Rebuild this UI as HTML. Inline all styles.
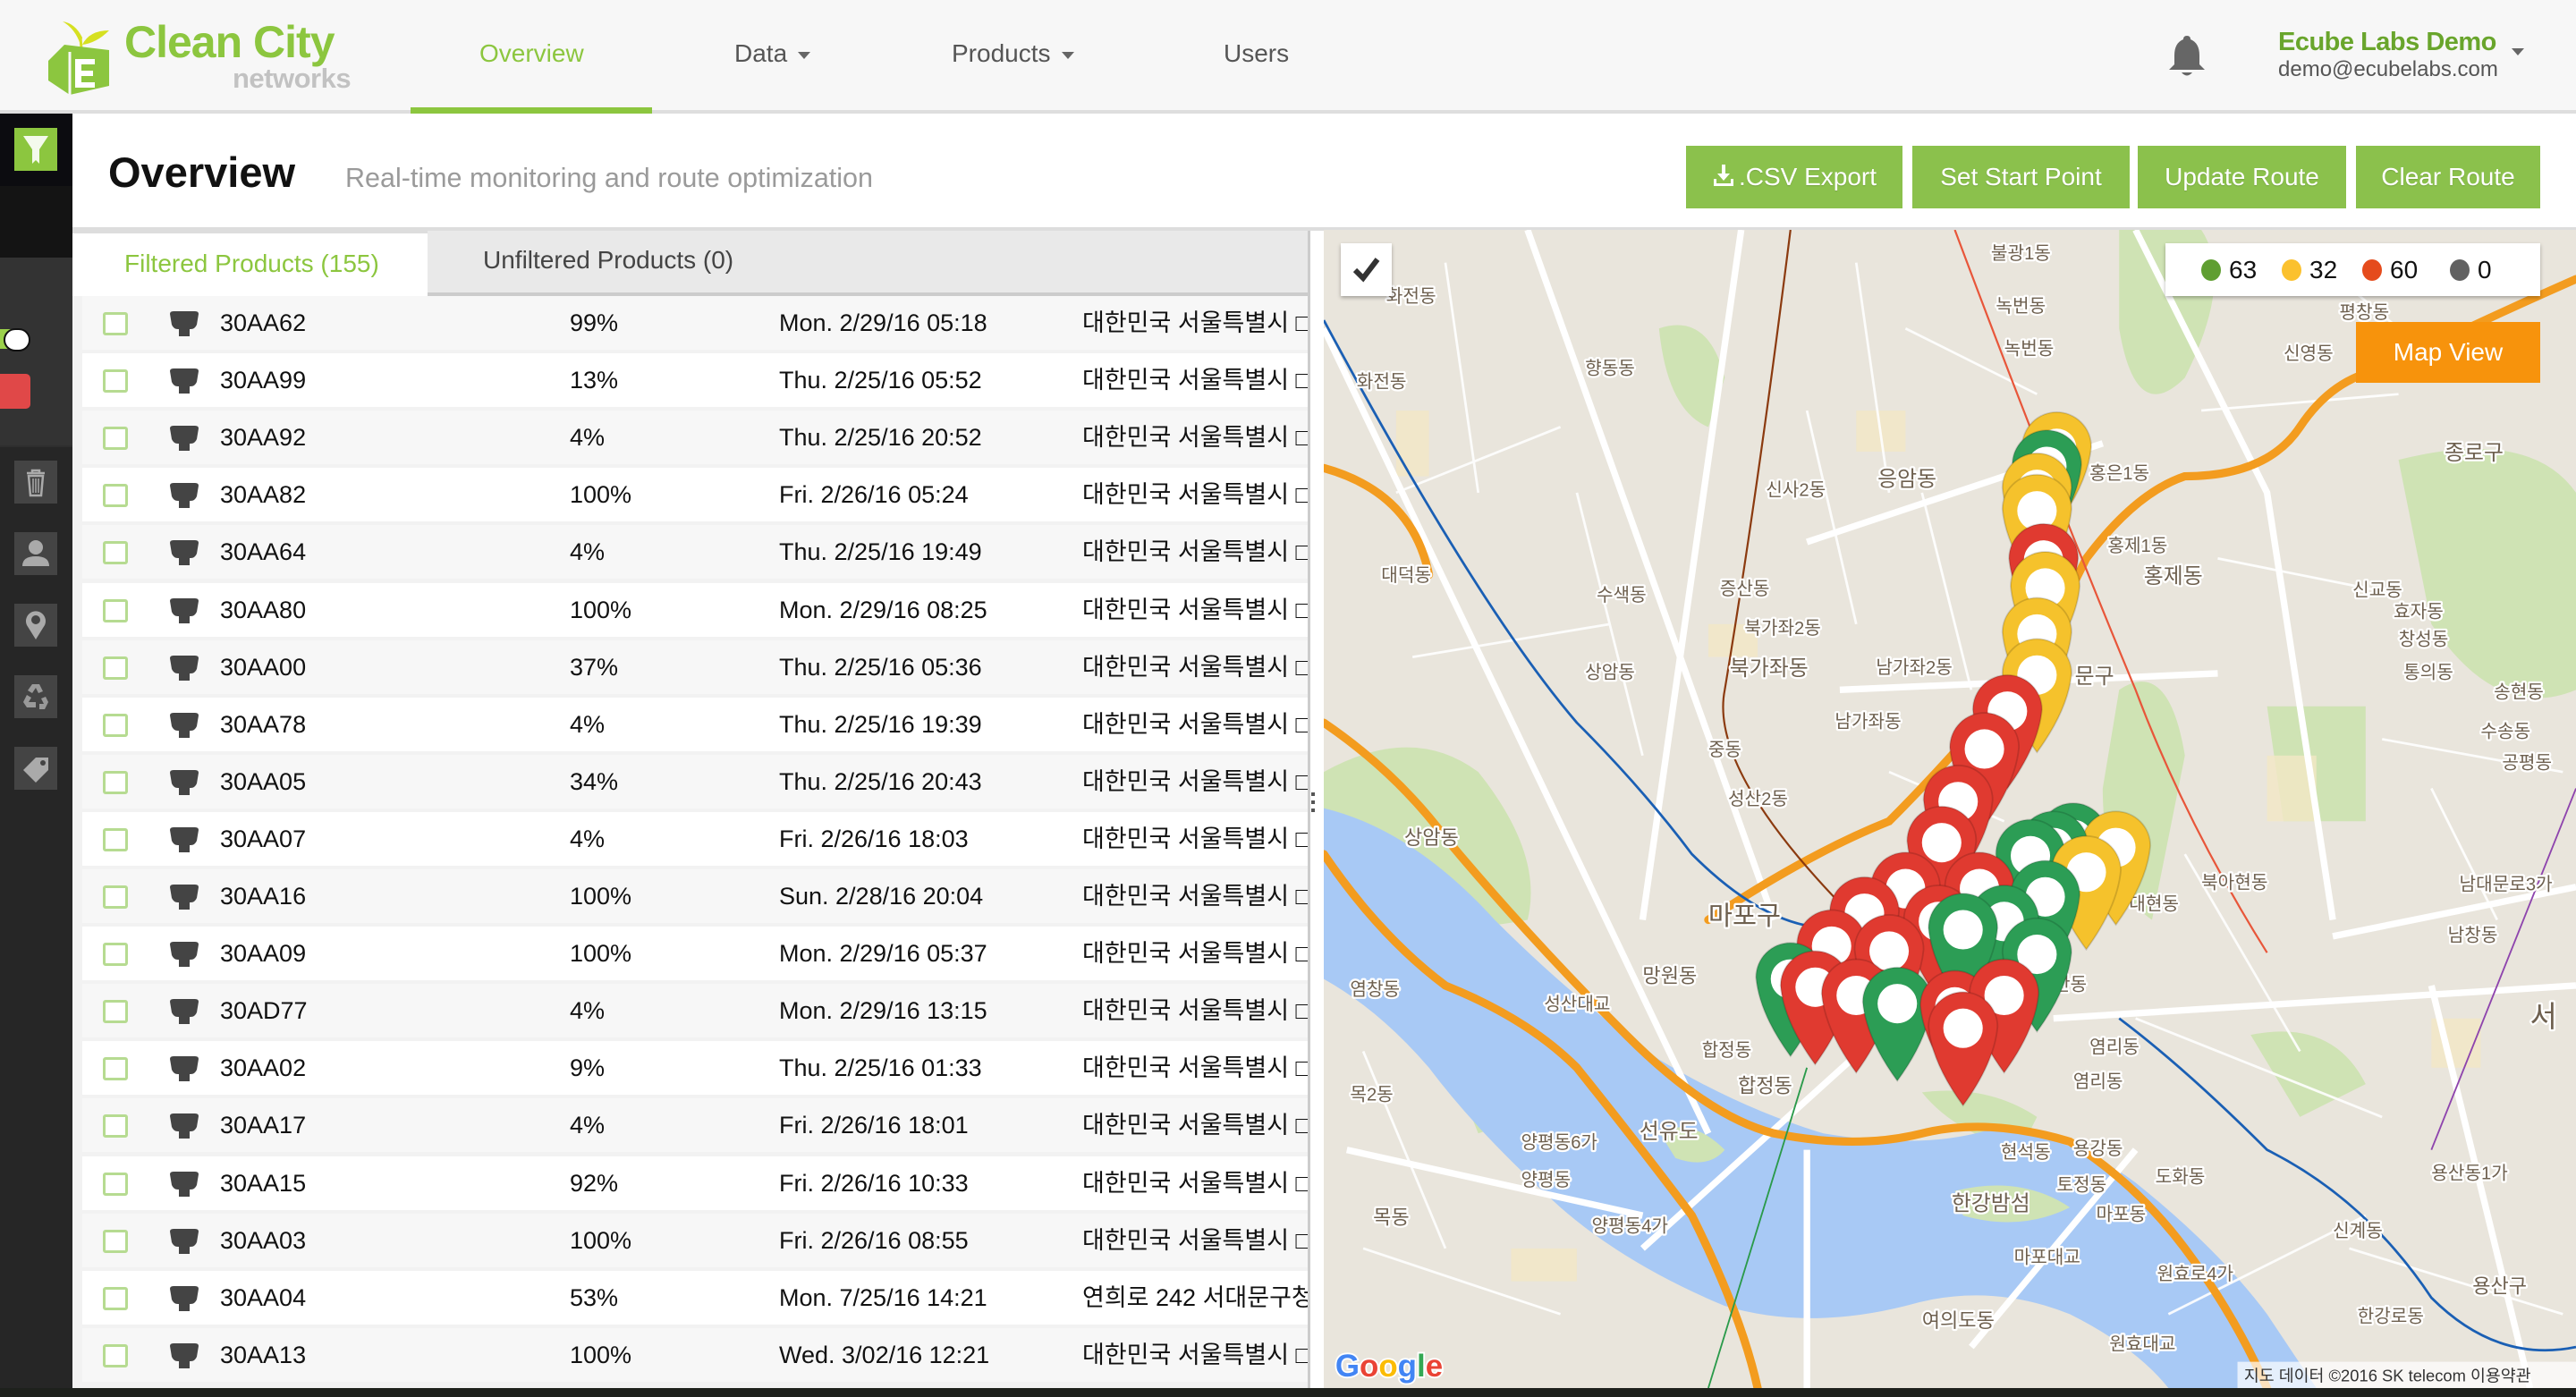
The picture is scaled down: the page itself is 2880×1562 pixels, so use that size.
<!DOCTYPE html>
<html><head><meta charset="utf-8"><style>
*{margin:0;padding:0;box-sizing:border-box}
body{width:2880px;height:1562px;overflow:hidden;background:#1c1f1a;font-family:"Liberation Sans","Noto Sans CJK KR",sans-serif;position:relative}
.abs{position:absolute}
#hdr{left:0;top:0;width:2880px;height:127px;background:#f7f7f7;border-bottom:4px solid #dedede}
.nav{position:absolute;top:44px;font-size:28px;color:#555}
.car{display:inline-block;width:0;height:0;border-left:7px solid transparent;border-right:7px solid transparent;border-top:8px solid #666;vertical-align:middle;margin-left:12px}
#side{left:0;top:127px;width:81px;height:1425px;background:#262626}
#main{left:81px;top:127px;width:2799px;height:1425px;background:#fff}
.btn{position:absolute;top:163px;height:70px;background:#8bc14c;color:#fff;font-size:28px;line-height:70px;text-align:center;text-shadow:0 1px 1px rgba(0,0,0,.15)}
.row{position:absolute;left:92px;width:1370px;height:60px;font-size:27px;color:#111;line-height:60px}
.row span{position:absolute;top:0}
.cb{position:absolute;left:23px;top:18px;width:28px;height:26px;border:3px solid #b6db91;border-radius:3px;background:#fff}
.bin{position:absolute;left:97px;top:16px;width:34px;height:30px}
.tile{position:absolute;left:16px;width:48px;height:48px;background:#444}
.lbl{font-family:"Liberation Sans","Noto Sans CJK KR",sans-serif;fill:#6e604f;stroke:#fff;stroke-width:2.5px;paint-order:stroke;stroke-linejoin:round}
</style></head><body>

<div id="hdr" class="abs">
  <svg class="abs" style="left:50px;top:20px" width="75" height="86" viewBox="0 0 75 86">
    <path d="M40 30 Q34 12 20 4 Q34 6 42 22 Z" fill="#d6e021"/>
    <path d="M42 30 Q50 14 72 14 Q58 28 42 30 Z" fill="#d6e021"/>
    <path d="M40 22 L41 34" stroke="#d6e021" stroke-width="3"/>
    <path d="M4 48 L22 30 L72 36 L72 76 L28 86 L4 70 Z" fill="#8cc63f"/>
    <path d="M28 38 L28 86" stroke="#f7f7f7" stroke-width="3"/>
    <path d="M34 46 h22 v6 h-15 v7 h13 v6 h-13 v7 h15 v6 h-22 z" fill="#fff"/>
  </svg>
  <div class="abs" style="left:139px;top:18px;font-size:50px;font-weight:bold;color:#8cc63f;letter-spacing:-1px">Clean City</div>
  <div class="abs" style="left:260px;top:70px;font-size:31px;font-weight:bold;color:#c2c2c2;letter-spacing:-0.5px">networks</div>
  <div class="nav" style="left:536px;color:#8cc63f">Overview</div>
  <div class="nav" style="left:821px">Data<span class="car"></span></div>
  <div class="nav" style="left:1064px">Products<span class="car"></span></div>
  <div class="nav" style="left:1368px">Users</div>
  <div class="abs" style="left:459px;top:120px;width:270px;height:7px;background:#8cc63f"></div>
  <svg class="abs" style="left:2423px;top:38px" width="44" height="50" viewBox="0 0 44 50"><path d="M22 2 Q26 2 26 6 Q36 10 36 24 L36 34 L42 40 L2 40 L8 34 L8 24 Q8 10 18 6 Q18 2 22 2Z" fill="#666"/><path d="M16 43 Q22 50 28 43Z" fill="#666"/></svg>
  <div class="abs" style="left:2547px;top:31px;font-size:29px;font-weight:bold;color:#69a52c;letter-spacing:-0.5px">Ecube Labs Demo</div>
  <div class="abs" style="left:2547px;top:64px;font-size:24px;color:#555">demo@ecubelabs.com</div>
  <div class="abs" style="left:2808px;top:54px;border-left:7px solid transparent;border-right:7px solid transparent;border-top:8px solid #666"></div>
</div>

<div id="side" class="abs">
  <div class="abs" style="left:0;top:0;width:81px;height:81px;background:#0c0c10"></div>
  <div class="abs" style="left:16px;top:16px;width:48px;height:48px;background:#8cc63f"><svg width="48" height="48"><path d="M10 9 H38 L28 24 V40 L24 36 L20 40 V24 Z" fill="#fff" opacity=".9"/></svg></div>
  <div class="abs" style="left:0;top:81px;width:81px;height:80px;background:#141414"></div>
  <div class="abs" style="left:0;top:161px;width:81px;height:210px;background:#333"></div>
  <div class="abs" style="left:0;top:241px;width:14px;height:22px;background:#9bd14b"></div>
  <div class="abs" style="left:4px;top:240px;width:30px;height:26px;background:#fff;border:2px solid #111;border-radius:14px"></div>
  <div class="abs" style="left:0;top:291px;width:34px;height:39px;background:#e04848;border-radius:0 5px 5px 0"></div>
  <div class="abs" style="left:0;top:371px;width:81px;height:2px;background:#2e2e2e"></div>
  <div class="tile" style="top:388px"><svg width="48" height="48"><path d="M14 14 h20 M20 14 v-3 h8 v3 M16 17 h16 l-2 22 h-12 z" fill="none" stroke="#aaa" stroke-width="2.5"/><path d="M21 20v16M24 20v16M27 20v16" stroke="#aaa" stroke-width="1.5"/></svg></div>
  <div class="tile" style="top:468px"><svg width="48" height="48"><circle cx="24" cy="17" r="8" fill="#aaa"/><path d="M9 38 Q9 27 24 27 Q39 27 39 38Z" fill="#aaa"/></svg></div>
  <div class="tile" style="top:548px"><svg width="48" height="48"><path d="M24 40 L14 24 A11 11 0 1 1 34 24 Z" fill="#aaa"/><circle cx="24" cy="18" r="5" fill="#444"/></svg></div>
  <div class="tile" style="top:628px"><svg width="48" height="48"><g fill="#999"><path d="M20 10 L28 10 L32 18 L27 20 L24 14 L20 20 L15 17Z"/><path d="M10 30 L14 22 L19 25 L16 30 L24 30 L24 36 L14 36Z"/><path d="M38 30 L34 38 L28 38 L28 32 L33 32 L30 26 L35 24Z"/></g></svg></div>
  <div class="tile" style="top:708px"><svg width="48" height="48"><path d="M10 26 L24 12 L38 12 L38 26 L24 40 Z" fill="#aaa"/><circle cx="32" cy="18" r="3" fill="#444"/></svg></div>
</div>

<div id="main" class="abs"></div>
<div class="abs" style="left:121px;top:165px;font-size:47px;font-weight:bold;color:#111">Overview</div>
<div class="abs" style="left:386px;top:182px;font-size:30.5px;color:#9a9a9a">Real-time monitoring and route optimization</div>
<div class="btn" style="left:1885px;width:242px"><svg width="26" height="28" viewBox="0 0 26 28" style="vertical-align:-3px;margin-right:4px"><path d="M11 2h4v10h5l-7 8-7-8h5z" fill="#fff"/><path d="M2 18v8h22v-8h-3v5H5v-5z" fill="#fff"/></svg>.CSV Export</div>
<div class="btn" style="left:2138px;width:243px">Set Start Point</div>
<div class="btn" style="left:2390px;width:233px">Update Route</div>
<div class="btn" style="left:2634px;width:206px">Clear Route</div>
<div class="abs" style="left:81px;top:254px;width:2799px;height:4px;background:#ddd"></div>

<div class="abs" style="left:81px;top:258px;width:1381px;height:1294px;background:#f2f2f2"></div>
<div class="abs" style="left:478px;top:258px;width:984px;height:73px;background:#e9e9e9;border-bottom:4px solid #ccc"></div>
<div class="abs" style="left:81px;top:258px;width:397px;height:73px;background:#fff;border-top:3px solid #ddd"></div>
<div class="abs" style="left:139px;top:279px;font-size:28px;color:#8cc63f">Filtered Products (155)</div>
<div class="abs" style="left:540px;top:275px;font-size:28px;color:#444">Unfiltered Products (0)</div>

<div id="rows"></div>
<div class="abs" style="left:1462px;top:258px;width:18px;height:1294px;background:#fff;border-left:3px solid #ccc"></div>
<div class="abs" style="left:1466px;top:886px;width:4px;height:4px;background:#555;box-shadow:0 9px 0 #555,0 18px 0 #555"></div>

<svg class="abs" style="left:1480px;top:257px" width="1400" height="1295" viewBox="806 140 762 705" preserveAspectRatio="none">
<rect x="806" y="140" width="762" height="705" fill="#e9e5dc"/>
<g fill="#cfe3b4">
<path d="M1010 200 Q1040 190 1050 230 L1040 260 Q1015 250 1010 200Z"/>
<path d="M1290 140 L1340 140 Q1360 170 1330 230 Q1300 260 1290 200Z"/>
<path d="M1460 280 Q1540 260 1568 300 L1568 420 Q1520 440 1480 380Z"/>
<path d="M1290 420 Q1320 400 1330 460 L1310 560 Q1280 540 1280 480Z"/>
<path d="M806 560 L806 470 Q860 440 900 470 Q940 520 930 560 Q880 570 806 560Z"/>
<path d="M1170 665 Q1210 660 1240 680 L1230 700 Q1190 690 1170 665Z"/>
<path d="M1380 430 L1440 430 L1440 500 L1390 500Z"/>
<path d="M880 640 Q920 640 930 680 L900 690Z"/>
<path d="M1370 630 Q1420 620 1440 660 L1400 680Z"/>
</g>
<g fill="#f3e7c6" opacity=".8">
<rect x="1200" y="520" width="40" height="30"/><rect x="1380" y="460" width="30" height="40"/><rect x="1040" y="380" width="30" height="20"/><rect x="1130" y="250" width="30" height="25"/><rect x="850" y="250" width="20" height="40"/><rect x="1480" y="620" width="30" height="30"/><rect x="920" y="760" width="40" height="20"/>
</g>
<path d="M806 492 Q860 505 910 560 Q960 610 1010 645 Q1060 675 1110 690 Q1170 700 1210 688 Q1260 690 1300 720 Q1350 760 1380 800 Q1400 830 1410 845 L1320 845 Q1300 820 1260 800 Q1210 780 1160 795 Q1100 810 1050 795 Q990 770 950 735 Q900 690 870 650 Q840 615 806 596Z" fill="#a8c9f5"/>
<path d="M1010 689 Q1030 680 1050 700 Q1040 712 1020 705Z" fill="#cfe3b4"/>
<path d="M1190 725 Q1230 715 1260 735 Q1230 750 1195 740Z" fill="#cfe3b4"/>
<g stroke="#fff" stroke-width="4" fill="none">
<path d="M806 200 L1040 690"/><path d="M930 140 L1080 560"/><path d="M1060 140 L1020 420 L1000 560"/>
<path d="M1100 330 L1280 270"/><path d="M1120 420 L1350 410"/><path d="M1300 140 L1380 300 L1420 560"/>
<path d="M1420 570 L1568 540"/><path d="M1000 760 L1210 570"/><path d="M1200 820 L1300 700"/>
<path d="M1100 700 L1100 845"/><path d="M1250 620 L1568 600"/><path d="M820 700 L1000 740"/><path d="M1480 600 L1540 845"/>
</g>
<g stroke="#fff" stroke-width="1.5" fill="none" opacity=".9">
<path d="M850 300 L950 260"/><path d="M860 400 L980 380"/><path d="M1130 160 L1150 300"/><path d="M1160 200 L1240 240"/><path d="M1350 340 L1450 360"/><path d="M1450 450 L1560 470"/><path d="M1300 620 L1450 680"/><path d="M830 760 L950 800"/><path d="M1430 760 L1560 800"/><path d="M1330 520 L1400 640"/>
<path d="M880 160 L900 300"/><path d="M960 300 L1000 460"/><path d="M1170 300 L1200 420"/><path d="M1340 250 L1460 240"/><path d="M1480 480 L1520 560"/><path d="M830 640 L880 760"/><path d="M1320 800 L1440 740"/><path d="M1150 470 L1220 500"/><path d="M1100 250 L1130 380"/><path d="M1400 150 L1460 200"/>
</g>
<g stroke="#f39c1f" stroke-width="5" fill="none" stroke-linecap="round">
<path d="M806 440 Q850 470 880 510 Q930 570 990 630 Q1040 680 1080 690 Q1130 700 1170 690 Q1210 680 1260 695 Q1300 720 1330 760 Q1360 800 1380 845"/>
<path d="M806 520 Q840 570 880 600 Q930 620 960 650 Q1000 700 1030 740 Q1060 800 1070 845"/>
<path d="M806 285 Q860 300 870 350"/>
<path d="M1040 560 Q1100 520 1150 500 Q1190 460 1240 400 L1270 340 Q1300 300 1330 290 Q1380 290 1400 260 Q1420 230 1450 225 Q1500 200 1568 170"/>
</g>
<path d="M806 195 Q900 370 960 440 Q1000 480 1030 520 Q1090 580 1140 560" stroke="#1a5fb4" stroke-width="1.5" fill="none"/>
<path d="M1290 620 Q1330 650 1380 700 Q1440 730 1480 790 Q1520 830 1568 820" stroke="#1a5fb4" stroke-width="1.5" fill="none"/>
<path d="M1090 140 Q1070 300 1050 420 Q1040 470 1130 560" stroke="#8b3a0f" stroke-width="1.2" fill="none"/>
<path d="M1190 140 Q1250 300 1300 420 Q1330 500 1380 580" stroke="#e8563a" stroke-width="1.2" fill="none"/>
<path d="M1100 650 L1040 845" stroke="#2a9a4a" stroke-width="1" fill="none"/>
<path d="M1480 700 L1568 480" stroke="#8e44ad" stroke-width="1" fill="none"/>
<g class="lbl" font-size="11">
<text x="844" y="184">화전동</text><text x="826" y="236">화전동</text><text x="965" y="228">향동동</text><text x="1075" y="302">신사2동</text>
<text x="1143" y="296" font-size="13">응암동</text><text x="1212" y="158">불광1동</text><text x="1215" y="190">녹번동</text><text x="1220" y="216">녹번동</text>
<text x="1390" y="219">신영동</text><text x="1424" y="194">평창동</text><text x="1488" y="280" font-size="13">종로구</text><text x="1272" y="292">홍은1동</text>
<text x="1283" y="336">홍제1동</text><text x="1305" y="355" font-size="13">홍제동</text><text x="841" y="354">대덕동</text><text x="972" y="366">수색동</text>
<text x="1047" y="362">증산동</text><text x="1062" y="386">북가좌2동</text><text x="1053" y="411" font-size="13">북가좌동</text><text x="1142" y="410">남가좌2동</text>
<text x="965" y="413">상암동</text><text x="1117" y="443">남가좌동</text><text x="1040" y="460">중동</text><text x="1052" y="490">성산2동</text>
<text x="1432" y="363">신교동</text><text x="1457" y="376">효자동</text><text x="1460" y="393">창성동</text><text x="1463" y="413">통의동</text>
<text x="1518" y="425">송현동</text><text x="1510" y="449">수송동</text><text x="1523" y="468">공평동</text><text x="1263" y="416" font-size="13">문구</text>
<text x="855" y="514" font-size="12">상암동</text><text x="1040" y="563" font-size="16">마포구</text><text x="1000" y="598" font-size="12">망원동</text>
<text x="940" y="615">성산대교</text><text x="822" y="606">염창동</text><text x="1036" y="643">합정동</text><text x="1058" y="665" font-size="12">합정동</text>
<text x="822" y="670">목2동</text><text x="926" y="699">양평동6가</text><text x="926" y="722">양평동</text><text x="998" y="693" font-size="13">선유도</text>
<text x="969" y="750">양평동4가</text><text x="836" y="745" font-size="12">목동</text><text x="1218" y="705">현석동</text><text x="1262" y="703">용강동</text>
<text x="1252" y="725">토정동</text><text x="1188" y="737" font-size="13">한강밤섬</text><text x="1276" y="743">마포동</text><text x="1226" y="769">마포대교</text>
<text x="1170" y="808" font-size="12">여의도동</text><text x="1284" y="822">원효대교</text><text x="1240" y="603">고산동</text><text x="1272" y="641">염리동</text>
<text x="1262" y="662">염리동</text><text x="1312" y="720">도화동</text><text x="1340" y="541">북아현동</text><text x="1296" y="554">대현동</text>
<text x="1420" y="753">신계동</text><text x="1313" y="779">원효로4가</text><text x="1435" y="805">한강로동</text><text x="1505" y="787" font-size="12">용산구</text>
<text x="1480" y="718">용산동1가</text><text x="1497" y="542">남대문로3가</text><text x="1490" y="573">남창동</text><text x="1540" y="625" font-size="18">서</text>
</g>
<g id="pins"></g>
<text x="813" y="838" font-family="Liberation Sans" font-size="19" font-weight="bold" fill="#4285f4" stroke="#fff" stroke-width="2" paint-order="stroke">G<tspan fill="#ea4335">o</tspan><tspan fill="#fbbc05">o</tspan><tspan fill="#4285f4">g</tspan><tspan fill="#34a853">l</tspan><tspan fill="#ea4335">e</tspan></text>
<rect x="1362" y="829" width="206" height="16" fill="#fff" opacity=".7"/>
<text x="1366" y="841" font-size="10" fill="#333" font-family="Liberation Sans,Noto Sans CJK KR">지도 데이터 ©2016 SK telecom   이용약관</text>
</svg>
<div class="abs" style="left:1499px;top:272px;width:57px;height:59px;background:#fff;box-shadow:0 2px 4px rgba(0,0,0,.3)"><svg width="57" height="59"><path d="M16 30 L25 39 L41 18" stroke="#333" stroke-width="6" fill="none"/></svg></div>
<div class="abs" style="left:2421px;top:272px;width:419px;height:59px;background:#fff;box-shadow:0 2px 4px rgba(0,0,0,.3);font-size:28px;line-height:59px;color:#111">
 <span class="abs" style="left:40px;top:18px;width:22px;height:24px;border-radius:50%;background:#5f9e31"></span><span class="abs" style="left:71px">63</span>
 <span class="abs" style="left:130px;top:18px;width:22px;height:24px;border-radius:50%;background:#fbc12e"></span><span class="abs" style="left:161px">32</span>
 <span class="abs" style="left:220px;top:18px;width:22px;height:24px;border-radius:50%;background:#e54b1c"></span><span class="abs" style="left:251px">60</span>
 <span class="abs" style="left:318px;top:18px;width:22px;height:24px;border-radius:50%;background:#616161"></span><span class="abs" style="left:349px">0</span>
</div>
<div class="abs" style="left:2634px;top:360px;width:206px;height:68px;background:#f7930c;color:#fff;font-size:28px;line-height:68px;text-align:center">Map View</div>
<div class="abs" style="left:0;top:1552px;width:2880px;height:10px;background:#1e211c"></div>

<script>
var data=[["30AA62","99%","Mon. 2/29/16 05:18"],["30AA99","13%","Thu. 2/25/16 05:52"],["30AA92","4%","Thu. 2/25/16 20:52"],["30AA82","100%","Fri. 2/26/16 05:24"],["30AA64","4%","Thu. 2/25/16 19:49"],["30AA80","100%","Mon. 2/29/16 08:25"],["30AA00","37%","Thu. 2/25/16 05:36"],["30AA78","4%","Thu. 2/25/16 19:39"],["30AA05","34%","Thu. 2/25/16 20:43"],["30AA07","4%","Fri. 2/26/16 18:03"],["30AA16","100%","Sun. 2/28/16 20:04"],["30AA09","100%","Mon. 2/29/16 05:37"],["30AD77","4%","Mon. 2/29/16 13:15"],["30AA02","9%","Thu. 2/25/16 01:33"],["30AA17","4%","Fri. 2/26/16 18:01"],["30AA15","92%","Fri. 2/26/16 10:33"],["30AA03","100%","Fri. 2/26/16 08:55"],["30AA04","53%","Mon. 7/25/16 14:21"],["30AA13","100%","Wed. 3/02/16 12:21"]];
var h="";data.forEach(function(d,i){var top=331+i*64.1;var addr=d[0]=="30AA04"?"연희로 242 서대문구청":"대한민국 서울특별시 □";
h+='<div class="row" style="top:'+top+'px;background:'+(i%2?'#fff':'#f7f7f7')+';overflow:hidden"><div class="cb"></div><svg class="bin" viewBox="0 0 34 30"><path d="M1 4 Q1 1 5 1 H29 Q33 1 33 4 L31 16 Q29 21 24 21 H10 Q5 21 3 16Z" fill="#444"/><rect x="11" y="21" width="12" height="8" fill="#444"/></svg><span style="left:154px">'+d[0]+'</span><span style="left:545px">'+d[1]+'</span><span style="left:779px">'+d[2]+'</span><span style="left:1118px;white-space:nowrap">'+addr+'</span></div>';});
document.getElementById("rows").innerHTML=h;
var C={r:"#e03a30",g:"#2c9d55",y:"#f5c22c"};
var P=[["y",1252,272],["g",1246,283],["y",1240,297],["y",1240,310],["r",1244,340],["y",1245,357],["y",1240,385],["y",1240,410],["r",1222,432],["r",1208,455],["r",1192,487],["g",1262,510],["y",1288,515],["g",1250,515],["r",1182,512],["g",1236,520],["y",1270,530],["r",1160,540],["r",1205,540],["g",1245,545],["r",1135,555],["r",1180,560],["g",1220,560],["r",1115,575],["r",1150,578],["g",1195,565],["g",1240,580],["g",1090,595],["r",1105,600],["r",1130,605],["g",1155,610],["r",1190,612],["r",1220,605],["r",1195,625]];
var s="";P.forEach(function(p){var c=C[p[0]],x=p[1],y=p[2];s+='<path d="M'+(x-21)+' '+y+' A21 21 0 1 1 '+(x+21)+' '+y+' Q'+(x+19)+' '+(y+22)+' '+x+' '+(y+48)+' Q'+(x-19)+' '+(y+22)+' '+(x-21)+' '+y+'Z" fill="'+c+'" stroke="rgba(0,0,0,.15)" stroke-width="1"/><circle cx="'+x+'" cy="'+(y+1)+'" r="12" fill="#fff"/>';});
document.getElementById("pins").innerHTML=s;
</script>
</body></html>
